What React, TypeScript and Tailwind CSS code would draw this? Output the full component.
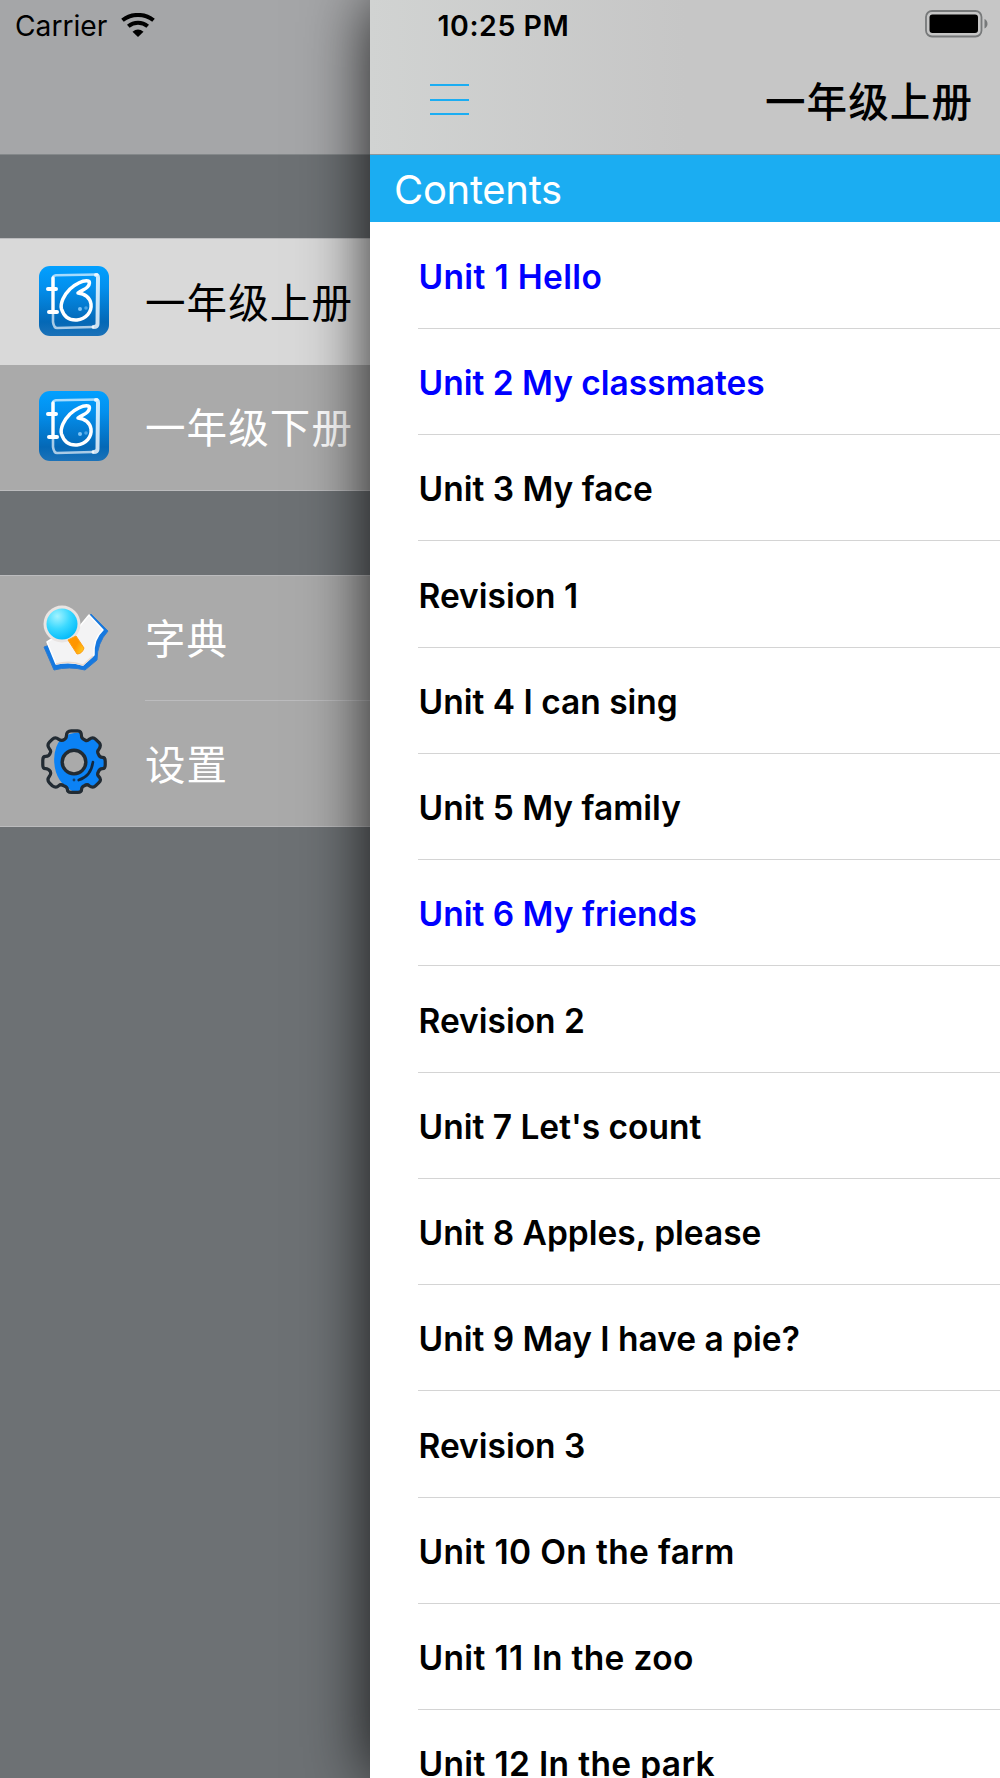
import { useState } from "react";

type Unit = { title: string; free?: boolean };

const units: Unit[] = [
  { title: "Unit 1 Hello", free: true },
  { title: "Unit 2 My classmates", free: true },
  { title: "Unit 3 My face" },
  { title: "Revision 1" },
  { title: "Unit 4 I can sing" },
  { title: "Unit 5 My family" },
  { title: "Unit 6 My friends", free: true },
  { title: "Revision 2" },
  { title: "Unit 7 Let's count" },
  { title: "Unit 8 Apples, please" },
  { title: "Unit 9 May I have a pie?" },
  { title: "Revision 3" },
  { title: "Unit 10 On the farm" },
  { title: "Unit 11 In the zoo" },
  { title: "Unit 12 In the park" },
];

const books = ["一年级上册", "一年级下册"];

function BookIcon() {
  return (
    <svg className="mb-[3px] h-[70px] w-[70px]" viewBox="0 0 70 70" fill="none">
      <defs>
        <linearGradient id="book" x1="0" y1="0" x2="0" y2="1">
          <stop offset="0" stopColor="#02a0ff" />
          <stop offset="0.3" stopColor="#0390ee" />
          <stop offset="0.8" stopColor="#0468b6" />
          <stop offset="1" stopColor="#1c72b8" />
        </linearGradient>
      </defs>
      <rect width="70" height="70" rx="11" fill="url(#book)" />
      <g stroke="#fff" strokeLinecap="round" strokeLinejoin="round">
        <path d="M14 22V12q0-2.500 3-2.800L58 8.500" strokeWidth="2.600" opacity="0.65" />
        <path d="M57 9q2 0 2 3l-.5 46q0 3-4 3" strokeWidth="4" opacity="0.8" />
        <path d="M54 61L18 62q-3 0-4-6V48" strokeWidth="2.600" opacity="0.65" />
        <path d="M14 12V45" strokeWidth="3.400" />
        <path d="M9 23H17M10 46H18" strokeWidth="4" />
        <path d="M49 15C43 14 37 18 31 23C25 29 21 37 22.500 43C25 51 31 54.500 38 54C47 53 53 46 52 38C51 32 46 27.500 39 27C42 24 46 24 48.500 21C51 18 51 15.500 49 15Z" strokeWidth="3.500" />
      </g>
      <circle cx="41" cy="43" r="2" fill="#7fc4f5" />
      <circle cx="47" cy="42" r="1.800" fill="#4aa5e6" />
    </svg>
  );
}

function DictionaryIcon() {
  return (
    <svg className="mb-1 h-[70px] w-[70px]" viewBox="0 0 70 70" fill="none">
      <defs>
        <radialGradient id="lens" cx="0.35" cy="0.25" r="0.8">
          <stop offset="0" stopColor="#a4f3ff" />
          <stop offset="0.5" stopColor="#3cd9ff" />
          <stop offset="1" stopColor="#00bafa" />
        </radialGradient>
        <linearGradient id="handle" x1="0" y1="0" x2="1" y2="0.6">
          <stop offset="0" stopColor="#ff9a00" />
          <stop offset="0.6" stopColor="#ff9500" />
          <stop offset="1" stopColor="#ffc21a" />
        </linearGradient>
      </defs>
      <path d="M5 45L15 68Q30 64 46 68L58 58Q58 41 69 29L52 12L38 33Z" fill="#1679e0" stroke="#2c7bd0" strokeWidth="1" strokeLinejoin="round" />
      <path d="M8 40L17 62Q31 59 44 63L55 53Q54 37 64 28L50 13L36 30L16 35Z" fill="#f3f3f4" stroke="#fff" strokeWidth="1.500" strokeLinejoin="round" />
      <path d="M17 62Q31 58 44 63L54 54" stroke="#eadbd0" strokeWidth="1.500" />
      <circle cx="23" cy="22" r="18.500" fill="#e9e4e2" />
      <circle cx="23" cy="22" r="15.500" fill="url(#lens)" />
      <path d="M29 38L37 34L45 46Q43 52 38 52Z" fill="url(#handle)" stroke="#ff9c12" strokeWidth="1" strokeLinejoin="round" />
    </svg>
  );
}

function GearIcon() {
  const gear =
    "M27 7Q27 2 32 2H39Q43 2 43 8Q43 10 47 12Q49 13 51 11Q55 8 58 11L62 15Q64 18 61 22Q59 24 61 27Q62 30 65 30Q68 30 68 34V38Q68 42 65 42Q62 42 61 45Q59 48 61 50Q65 54 61 57L58 60Q55 63 51 60Q49 58 46 60Q43 61 43 64Q43 67 39 67H32Q28 67 28 64Q28 61 24 60Q21 58 19 60Q16 63 12 60L9 57Q6 54 9 50Q11 48 10 45Q8 42 5 42Q2 42 2 38V33Q2 29 5 29Q9 29 10 25Q11 23 9 21Q6 17 9 14L12 11Q15 8 19 11Q22 13 25 11Q27 10 27 7Z";
  return (
    <svg className="mb-px h-[70px] w-[70px]" viewBox="-2 -1 74 74" fill="none">
      <defs>
        <clipPath id="gear">
          <path d={gear} />
        </clipPath>
      </defs>
      <path d="M70 4H45Q15 2 14 32Q14 56 34 66H70Z" fill="#0b82f5" clipPath="url(#gear)" />
      <path d={gear} stroke="#222b33" strokeWidth="3.400" />
      <circle cx="35" cy="35" r="12.500" fill="#aaaaaa" stroke="#222b33" strokeWidth="3.600" />
      <path d="M55 35Q53 50 40 54" stroke="#12283f" strokeWidth="2.800" strokeLinecap="round" />
      <circle cx="35" cy="54" r="1.500" fill="#12406f" />
    </svg>
  );
}

function WifiIcon() {
  return (
    <svg className="mb-[3px] h-6 w-[34px]" viewBox="0 0 34 24" fill="none">
      <path d="M1.500 7.300Q8 1.900 17 1.900T32.500 7.300" stroke="#000" strokeWidth="4" />
      <path d="M7.300 13.300Q11.500 9.700 17 9.700T26.700 13.300" stroke="#000" strokeWidth="4" />
      <path d="M11.500 18.700Q17 14.500 22.500 18.700L17 24Z" fill="#000" />
    </svg>
  );
}

function BatteryIcon() {
  return (
    <svg className="mb-[4px] h-7 w-[64px]" viewBox="0 0 64 28" fill="none">
      <rect x="1" y="1" width="55.500" height="25.500" rx="6" stroke="#77797a" strokeWidth="1.800" />
      <rect x="4.500" y="4.500" width="48.500" height="18.500" rx="3" fill="#000" />
      <path d="M59.500 9Q62.500 10.500 62.500 13.800T59.500 18.500Z" fill="#77797a" />
    </svg>
  );
}

export default function App() {
  const [book, setBook] = useState(0);

  return (
    <div className="flex h-[1778px] w-[1000px] overflow-hidden bg-[#6d7174] font-['Inter','Noto_Sans_CJK_SC',sans-serif]">
      <aside className="flex w-[370px] shrink-0 flex-col">
        <header className="h-[155px] border-b border-[#84888a] bg-[#a5a6a8] pt-[6px] pl-[15px]">
          <div className="flex h-10 items-center gap-[14px] text-[28.2px] leading-none">
            <span className="w-[92px] pt-px whitespace-nowrap">Carrier</span>
            <WifiIcon />
          </div>
        </header>

        <nav className="mt-[83px] flex flex-col border-y border-[#bcbcbe] text-[40.5px] tracking-[1.1px]">
          {books.map((name, i) => (
            <button
              key={name}
              onClick={() => setBook(i)}
              className={`flex items-center gap-9 pl-[39px] whitespace-nowrap ${
                book === i ? "h-[126px] bg-[#d9d9d9] text-black" : "h-[125px] bg-[#aaaaaa] text-white"
              }`}
            >
              <BookIcon />
              <span className="pt-1">{name}</span>
            </button>
          ))}
        </nav>

        <nav className="mt-[84px] flex flex-col border-y border-[#bcbcbe] bg-[#aaaaaa] text-[40.5px] tracking-[1.1px] text-white">
          <button className="flex h-[125px] items-center pl-[39px]">
            <DictionaryIcon />
            <span className="ml-9 flex h-full flex-1 items-center border-b border-[#bcbcbe] pt-1">字典</span>
          </button>
          <button className="flex h-[125px] items-center gap-9 pl-[39px]">
            <GearIcon />
            <span className="pt-1.5">设置</span>
          </button>
        </nav>
      </aside>

      <main className="w-[630px] shrink-0 bg-white shadow-[0_0_62px_rgba(0,0,0,0.82)]">
        <header className="h-[155px] border-b border-[#8b979d] bg-linear-to-r from-[#d1d3d2] via-[#c6c6c6] via-50% to-[#c6c6c6] pt-[6px]">
          <div className="flex h-10 items-center justify-between pr-[11px] pl-[67.5px] text-[28.5px] leading-none font-semibold">
            <span className="tracking-[0.55px]">10:25 PM</span>
            <BatteryIcon />
          </div>
          <div className="mt-3 flex h-[86px] items-center justify-between pr-[27px] pl-[60px]">
            <button className="mb-[3px] flex flex-col gap-[12.5px]">
              <span className="h-[2px] w-[39px] bg-[#1badf2]" />
              <span className="h-[2px] w-[39px] bg-[#1badf2]" />
              <span className="h-[2px] w-[39px] bg-[#1badf2]" />
            </button>
            <h1 className="pt-1 text-[40.5px] leading-none font-medium tracking-[1.1px]">{books[book]}</h1>
          </div>
        </header>

        <h2 className="flex h-[67px] items-center bg-[#1badf2] pt-[3px] pl-6 text-[40px] leading-none tracking-[-0.3px] text-white">
          Contents
        </h2>

        <ul className="pt-[0.5px]">
          {units.map((unit) => (
            <li
              key={unit.title}
              className={`ml-12 flex h-[106.25px] items-center border-b border-[#d4d4d4] pt-[5px] pl-[0.5px] text-[33.5px] leading-none font-semibold whitespace-nowrap ${
                unit.free ? "text-[#0000ff]" : "text-black"
              } ${unit.title.startsWith("Unit 1") ? "tracking-[0.35px]" : ""}`}
            >
              {unit.title}
            </li>
          ))}
        </ul>
      </main>
    </div>
  );
}
